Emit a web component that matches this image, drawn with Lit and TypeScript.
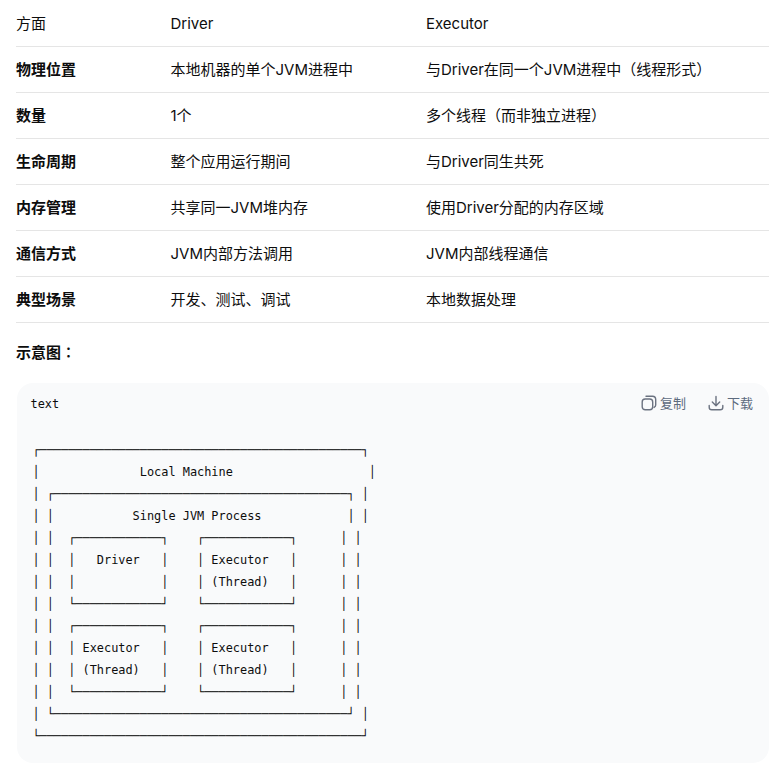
import { LitElement, html, css } from "lit";
import { customElement } from "lit/decorators.js";

const rows: [string, string, string][] = [
  ["物理位置", "本地机器的单个JVM进程中", "与Driver在同一个JVM进程中（线程形式）"],
  ["数量", "1个", "多个线程（而非独立进程）"],
  ["生命周期", "整个应用运行期间", "与Driver同生共死"],
  ["内存管理", "共享同一JVM堆内存", "使用Driver分配的内存区域"],
  ["通信方式", "JVM内部方法调用", "JVM内部线程通信"],
  ["典型场景", "开发、测试、调试", "本地数据处理"],
];

const line = (...parts: [number, string][]) => {
  let s = "";
  for (const [col, text] of parts) s = s.padEnd(col, " ") + text;
  return s;
};
const h = (n: number) => "─".repeat(n);
const boxTop = `┌${h(12)}┐`;
const boxBottom = `└${h(12)}┘`;

const art = [
  line([0, `┌${h(45)}┐`]),
  line([0, "│"], [15, "Local Machine"], [47, "│"]),
  line([0, "│"], [2, `┌${h(41)}┐`], [46, "│"]),
  line([0, "│"], [2, "│"], [14, "Single JVM Process"], [44, "│"], [46, "│"]),
  line([0, "│"], [2, "│"], [5, boxTop], [23, boxTop], [43, "│"], [45, "│"]),
  line([0, "│"], [2, "│"], [5, "│"], [9, "Driver"], [18, "│"], [23, "│"], [25, "Executor"], [36, "│"], [43, "│"], [45, "│"]),
  line([0, "│"], [2, "│"], [5, "│"], [18, "│"], [23, "│"], [25, "(Thread)"], [36, "│"], [43, "│"], [45, "│"]),
  line([0, "│"], [2, "│"], [5, boxBottom], [23, boxBottom], [43, "│"], [45, "│"]),
  line([0, "│"], [2, "│"], [5, boxTop], [23, boxTop], [43, "│"], [45, "│"]),
  line([0, "│"], [2, "│"], [5, "│"], [7, "Executor"], [18, "│"], [23, "│"], [25, "Executor"], [36, "│"], [43, "│"], [45, "│"]),
  line([0, "│"], [2, "│"], [5, "│"], [7, "(Thread)"], [18, "│"], [23, "│"], [25, "(Thread)"], [36, "│"], [43, "│"], [45, "│"]),
  line([0, "│"], [2, "│"], [5, boxBottom], [23, boxBottom], [43, "│"], [45, "│"]),
  line([0, "│"], [2, `└${h(41)}┘`], [46, "│"]),
  line([0, `└${h(45)}┘`]),
].join("\n");

@customElement("app-root")
export class AppRoot extends LitElement {
  static styles = css`
    :host {
      display: block;
      background: #fff;
      color: #0d0d0d;
      font-family: Inter, "Noto Sans CJK SC", sans-serif;
      font-size: 15px;
      line-height: 24px;
      text-spacing-trim: space-all;
    }
    .page {
      padding: 1px 12px 1px 16px;
    }
    table {
      width: 753px;
      border-collapse: collapse;
      table-layout: fixed;
    }
    .c1 { width: 154.5px; }
    .c2 { width: 255.5px; }
    th, td {
      padding: 11px 0 10px;
      text-align: left;
      font-weight: 400;
      border-bottom: 1px solid #e5e5e5;
    }
    td.key { font-weight: 700; }
    .title {
      margin: 18px 0 18px;
      height: 24px;
      font-weight: 700;
    }
    .colon {
      font-family: "Noto Sans CJK TC", sans-serif;
      font-weight: 500;
      line-height: 1;
    }
    .code {
      margin-left: 1px;
      background: #f9fafb;
      border-radius: 16px;
      height: 380px;
      box-sizing: border-box;
      padding: 11px 16px 0 13.5px;
    }
    .bar {
      display: flex;
      align-items: center;
      height: 20px;
      font-family: "DejaVu Sans Mono", monospace;
      font-size: 11.9px;
    }
    .lang { flex: 1; }
    .act {
      display: flex;
      align-items: center;
      gap: 3px;
      margin-left: 22px;
      padding-bottom: 2px;
      color: #5d6b7e;
      font-family: Inter, "Noto Sans CJK SC", sans-serif;
      font-size: 13px;
    }
    .act svg { width: 16px; height: 16px; display: block; }
    pre {
      margin: 25px 0 0 1.9px;
      font-family: "DejaVu Sans Mono", monospace;
      font-size: 11.9px;
      line-height: 22px;
      color: #0d0d0d;
    }
  `;

  render() {
    return html`<div class="page">
      <table>
        <colgroup><col class="c1" /><col class="c2" /><col /></colgroup>
        <thead><tr><th>方面</th><th>Driver</th><th>Executor</th></tr></thead>
        <tbody>
          ${rows.map(
            (r) => html`<tr><td class="key">${r[0]}</td><td>${r[1]}</td><td>${r[2]}</td></tr>`
          )}
        </tbody>
      </table>
      <div class="title">示意图<span class="colon">：</span></div>
      <div class="code">
        <div class="bar">
          <span class="lang">text</span>
          <span class="act">
            <svg viewBox="0 0 16 16" fill="none" stroke="#6b7280" stroke-width="1.4" stroke-linecap="round">
              <rect x="1.2" y="4" width="10.5" height="10.8" rx="3"></rect>
              <path d="M5 1.3h6.5a3.2 3.2 0 0 1 3.2 3.2V10a2.6 2.6 0 0 1-1.6 2.4"></path>
            </svg>复制
          </span>
          <span class="act">
            <svg viewBox="0 0 16 16" fill="none" stroke="#6b7280" stroke-width="1.4" stroke-linecap="round" stroke-linejoin="round">
              <path d="M8 1.5v9M4.3 7l3.7 3.7L11.7 7"></path>
              <path d="M1.2 10.5v1.7a2.6 2.6 0 0 0 2.6 2.6h8.4a2.6 2.6 0 0 0 2.6-2.6v-1.7"></path>
            </svg>下载
          </span>
        </div>
        <pre>${art}</pre>
      </div>
    </div>`;
  }
}
